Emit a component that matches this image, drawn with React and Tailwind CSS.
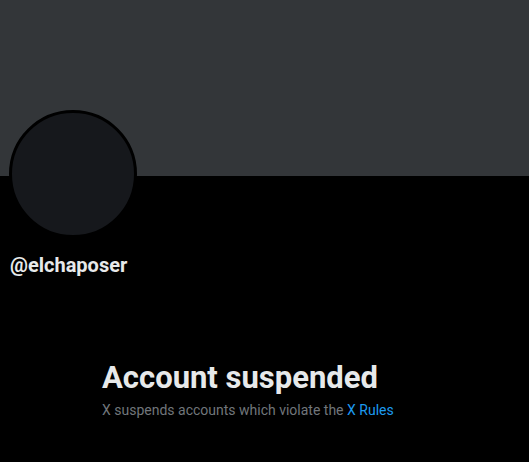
export default function App() {
  return (
    <div
      className="w-[529px] h-[462px] bg-black overflow-hidden"
      style={{ fontFamily: 'Roboto, "Noto Sans", sans-serif' }}
    >
      {/* banner */}
      <div className="h-[176px] bg-[#333639]" />

      {/* avatar + handle */}
      <div className="px-[9px]">
        <div className="-mt-[66px] w-[128px] h-[128px] rounded-full bg-[#16181c] border-[3px] border-black" />
        <div className="mt-[15px] pl-[1px] text-[20px] leading-[24px] font-bold text-[#e7e9ea] whitespace-nowrap">
          @elchaposer
        </div>
      </div>

      {/* empty state */}
      <div className="mt-[83px] mx-auto w-[325px]">
        <h2 className="text-[31px] leading-[36px] font-bold text-[#e7e9ea] whitespace-nowrap">
          Account suspended
        </h2>
        <p className="mt-[4px] text-[14px] leading-[20px] text-[#71767b] whitespace-nowrap">
          X suspends accounts which violate the{' '}
          <a href="#" className="text-[#1d9bf0]">X Rules</a>
        </p>
      </div>
    </div>
  );
}
